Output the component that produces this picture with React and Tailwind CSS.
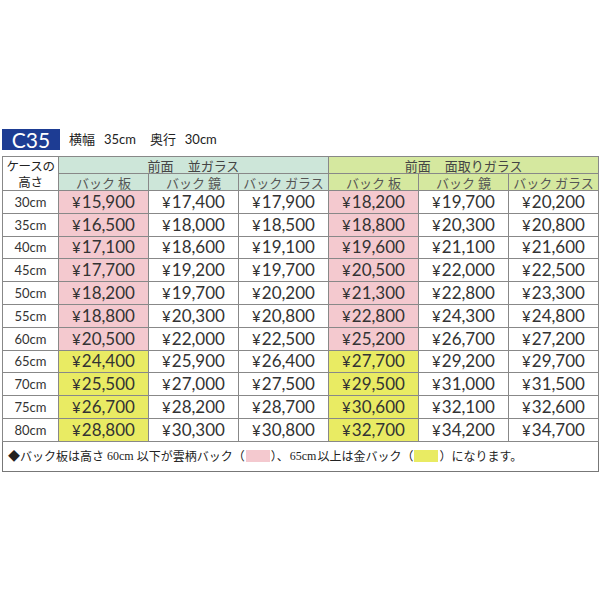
const heights = ['30cm', '35cm', '40cm', '45cm', '50cm', '55cm', '60cm', '65cm', '70cm', '75cm', '80cm'];

const prices = [
  ['15,900', '17,400', '17,900', '18,200', '19,700', '20,200'],
  ['16,500', '18,000', '18,500', '18,800', '20,300', '20,800'],
  ['17,100', '18,600', '19,100', '19,600', '21,100', '21,600'],
  ['17,700', '19,200', '19,700', '20,500', '22,000', '22,500'],
  ['18,200', '19,700', '20,200', '21,300', '22,800', '23,300'],
  ['18,800', '20,300', '20,800', '22,800', '24,300', '24,800'],
  ['20,500', '22,000', '22,500', '25,200', '26,700', '27,200'],
  ['24,400', '25,900', '26,400', '27,700', '29,200', '29,700'],
  ['25,500', '27,000', '27,500', '29,500', '31,000', '31,500'],
  ['26,700', '28,200', '28,700', '30,600', '32,100', '32,600'],
  ['28,800', '30,300', '30,800', '32,700', '34,200', '34,700'],
];

const jp = { fontFamily: '"Noto Sans CJK JP", sans-serif' };
const num = { fontFamily: 'Lato, "Noto Sans CJK JP", sans-serif' };
const serif = { fontFamily: '"Liberation Serif", serif' };

const subHeads = ['バック 板', 'バック 鏡', 'バック ガラス'];

export default function App() {
  return (
    <div className="w-[600px] h-[600px] bg-white pt-[129px] pl-[2px]">
      <div className="flex items-center gap-2 h-[21px]">
        <div className="w-[58px] h-[21px] bg-[#1d3c93] text-white text-[21px] leading-[21px] text-center" style={num}>
          C35
        </div>
        <div className="text-[13px] text-[#222] flex gap-[14px] ml-[1px]" style={jp}>
          <span>横幅 <span className="ml-[6px]" style={num}>35cm</span></span>
          <span>奥行 <span className="ml-[6px]" style={num}>30cm</span></span>
        </div>
      </div>

      <table className="mt-[6px] border-collapse border border-[#777] text-[#333] table-fixed w-[596px]">
        <colgroup>
          <col className="w-[56px]" />
          <col className="w-[90px]" />
          <col className="w-[90px]" />
          <col className="w-[90px]" />
          <col className="w-[90px]" />
          <col className="w-[90px]" />
          <col className="w-[90px]" />
        </colgroup>
        <thead>
          <tr className="h-[17px]">
            <th
              rowSpan={2}
              className="border border-[#888] p-0 font-normal text-[12.5px] leading-[16px] tracking-[-0.3px] whitespace-nowrap text-[#222]"
              style={jp}
            >
              <div className="h-[16px]">ケースの</div>
              <div className="h-[16px]">高さ</div>
            </th>
            <th colSpan={3} className="border border-[#888] p-0 bg-[#cde6d9] font-normal text-[13px] leading-[15px] text-[#444]" style={jp}>
              前面<span className="ml-[14px]">並ガラス</span>
            </th>
            <th colSpan={3} className="border border-[#888] p-0 bg-[#d5e89f] font-normal text-[13px] leading-[15px] text-[#444]" style={jp}>
              前面<span className="ml-[14px]">面取りガラス</span>
            </th>
          </tr>
          <tr className="h-[17px]">
            {[0, 1, 2, 3, 4, 5].map((i) => (
              <th
                key={i}
                className={
                  'border border-[#888] p-0 font-normal text-[13px] leading-[15px] text-[#555] ' +
                  (i < 3 ? 'bg-[#cde6d9]' : 'bg-[#d5e89f]')
                }
                style={jp}
              >
                {subHeads[i % 3]}
              </th>
            ))}
          </tr>
        </thead>
        <tbody>
          {heights.map((h, r) => (
            <tr key={h} className="h-[22.8px]">
              <td className="border border-[#888] p-0 text-center text-[13px] leading-[20px] text-[#333]" style={num}>
                {h}
              </td>
              {prices[r].map((p, c) => {
                const tint = c % 3 === 0 ? (r < 7 ? 'bg-[#f4c9cf]' : 'bg-[#e9eb63]') : '';
                return (
                  <td
                    key={c}
                    className={'border border-[#888] p-0 text-center text-[17px] leading-[20px] text-[#333] ' + tint}
                    style={num}
                  >
                    <span className="text-[15px] mr-[1px]">¥</span>{p}
                  </td>
                );
              })}
            </tr>
          ))}
          <tr className="h-[30px]">
            <td colSpan={7} className="border border-[#777] pl-[5px] text-[12px] text-[#222]" style={jp}>
              <span className="inline-flex items-center">
                ◆バック板は高さ <span className="mx-[3px]" style={serif}>60cm</span>以下が雲柄バック（
                <span className="inline-block w-[24px] h-[12px] bg-[#f4c9cf] mx-[1px]" />
                ）、<span className="mx-[1px]" style={serif}>65cm</span> 以上は金バック（
                <span className="inline-block w-[24px] h-[12px] bg-[#e9eb63] mx-[1px]" />
                ）になります。
              </span>
            </td>
          </tr>
        </tbody>
      </table>
    </div>
  );
}
